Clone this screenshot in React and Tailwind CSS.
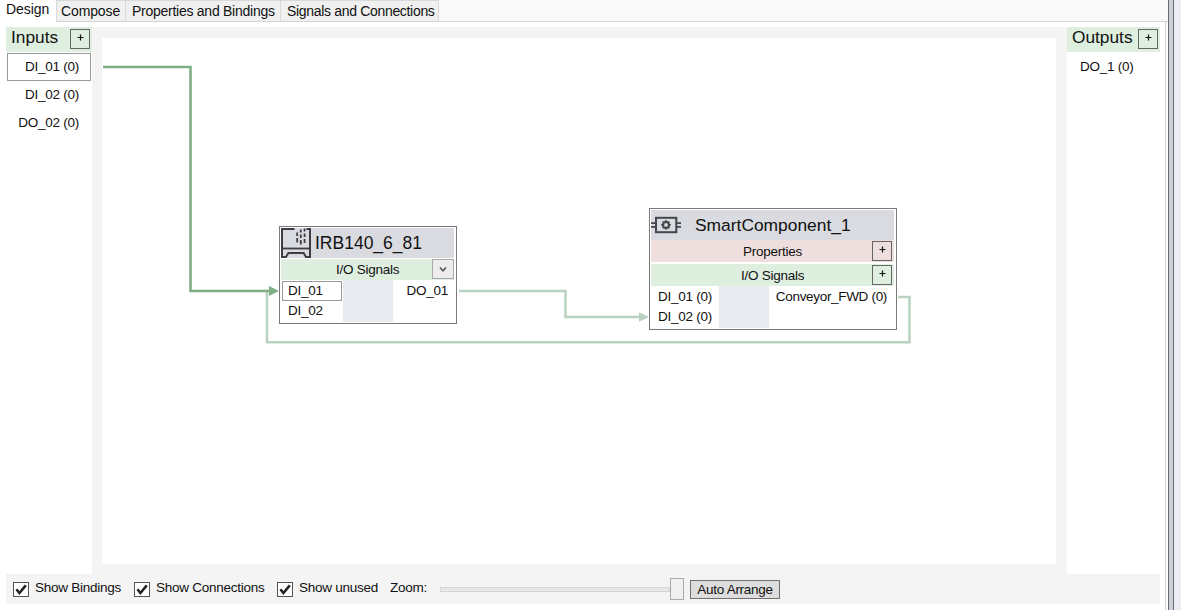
import React from 'react';

const CheckBox = ({ label, className }) => (
  <label className={`flex items-start ${className}`}>
    <span className="mt-[8px] h-[15px] w-[16px] shrink-0 border border-[#555] bg-white">
      <svg className="h-[13px] w-[14px]" viewBox="0 0 14 13" fill="none">
        <path d="M2.4 6.2 L5.4 10 L11.8 2.4" stroke="#222" strokeWidth="2.5" />
      </svg>
    </span>
    <span className="ml-[6px] mt-[4px] whitespace-nowrap leading-5">{label}</span>
  </label>
);

const PlusButton = ({ className }) => (
  <button className={`flex h-5 w-5 shrink-0 items-center justify-center border border-[#666] ${className}`}>
    <svg className="mb-[3px] h-[7px] w-[7px]" viewBox="0 0 7 7">
      <path d="M0.5 3.5 H6.5 M3.5 0.5 V6.5" stroke="#111" strokeWidth="1.2" />
    </svg>
  </button>
);

const ControllerIcon = () => (
  <svg className="h-[30px] w-[30px] shrink-0" viewBox="0 0 30 30" fill="none" stroke="#3e3e42">
    <path d="M13.5 1 H1 V29 H5 L7.4 25 H22.6 L25 29 H29 V1 H25.5" strokeWidth="2" />
    <path d="M1 20.5 H29" strokeWidth="1.8" />
    <path d="M16.2 4.5 V8 M16.2 10 V14.5 M19.8 1.5 V4.5 M19.8 6.5 V10 M19.8 12 V16.5 M23.6 0.5 V3.5 M23.6 5.5 V9 M23.6 11 V15" strokeWidth="1.8" />
  </svg>
);

const ComponentIcon = () => (
  <svg className="mt-[6px] h-[18px] w-[30px] shrink-0" viewBox="0 0 30 18" fill="none" stroke="#44464b">
    <rect x="5" y="1.8" width="20.3" height="14.4" strokeWidth="2" />
    <path d="M0 7.2 H5 M0 10.8 H5 M25 7.2 H30 M25 10.8 H30" strokeWidth="1.7" />
    <circle cx="15" cy="8.9" r="2.9" strokeWidth="2" />
    <path d="M15 4.1 V6 M15 11.8 V13.7 M10.2 8.9 H12 M18 8.9 H19.8 M11.6 5.5 L13 6.9 M17 10.9 L18.4 12.3 M18.4 5.5 L17 6.9 M13 10.9 L11.6 12.3" strokeWidth="1.6" />
  </svg>
);

const Connections = () => (
  <svg className="absolute inset-0 h-full w-full" viewBox="102 38 954 526" fill="none">
    <g stroke="#b9d2c0" strokeWidth="2.5">
      <path d="M898 297 H909.5 V342.3 H267 V291" />
      <path d="M459 291 H565.5 V317 H640" />
    </g>
    <path d="M639 312.3 L649 317 L639 321.7 Z" fill="#b9d2c0" />
    <path d="M103 67 H190.5 V291 H270" stroke="#80ae86" strokeWidth="2.6" />
    <path d="M269 286 L279 291 L269 296 Z" fill="#80ae86" />
  </svg>
);

const tabs = [
  { name: 'Compose', cls: 'w-[70px] pl-[4px] tracking-[-0.12px]' },
  { name: 'Properties and Bindings', cls: 'w-[155px] pl-[6px] tracking-[-0.26px]' },
  { name: 'Signals and Connections', cls: 'w-[158px] pl-[6px] tracking-[-0.32px]' },
];

export default function App() {
  return (
    <div className="flex h-[610px] w-[1181px] overflow-hidden bg-white font-['Liberation_Sans',Arial,sans-serif] text-[13.5px] tracking-[-0.26px] text-[#111]">
      <div className="flex w-[1168px] flex-col">
        <nav className="flex h-[22px] shrink-0 bg-[#f9f9f9] text-[14px]">
          <div className="w-[56px] bg-white pl-[6px] leading-[19px] tracking-[-0.05px]">Design</div>
          <div className="flex flex-1 border-b border-[#d5d5d5]">
            {tabs.map((t) => (
              <div key={t.name} className={`whitespace-nowrap border-r border-t border-[#d9d9d9] bg-[#f0f0f0] leading-[21px] first:border-l ${t.cls}`}>
                {t.name}
              </div>
            ))}
          </div>
        </nav>

        <div className="mr-[2px] flex-1 border-r border-[#d0d0d0] pl-[6px] pt-[5px]">
          <main className="flex h-[577px] w-[1154px] flex-col bg-[#f4f4f4]">
            <div className="flex h-[547px]">
              <aside className="w-[86px] bg-white">
                <header className="flex h-[25px] items-start bg-[#deeedf]">
                  <h2 className="w-[64px] pl-[5px] text-[17.3px] leading-[20px] tracking-normal">Inputs</h2>
                  <PlusButton className="mt-[2px]" />
                </header>
                <div className="ml-[1px] mt-[1px] flex h-7 w-[84px] items-center justify-end border border-[#999] pr-[11px]">DI_01 (0)</div>
                <div className="flex h-7 items-center justify-end pr-[13px]">DI_02 (0)</div>
                <div className="flex h-7 items-center justify-end pr-[13px]">DO_02 (0)</div>
              </aside>

              <section className="relative ml-[10px] mt-[11px] h-[526px] w-[954px] bg-white">
                <Connections />

                <article className="absolute left-[177px] top-[188px] h-[98px] w-[178px] border border-[#7a7a7a] bg-white pb-[1px] pl-[1px] pr-[2px] pt-[1px]">
                  <div className="flex h-[30px] bg-[#dadbe0]">
                    <ControllerIcon />
                    <h3 className="pl-[4px] text-[17.5px] leading-[30px] tracking-normal">IRB140_6_81</h3>
                  </div>
                  <div className="mt-[1px] flex h-[21px] bg-[#deeedf]">
                    <span className="w-[151px] pl-[55px] leading-[21px]">I/O Signals</span>
                    <button className="flex h-[20px] w-[22px] items-center justify-center border border-[#aaa] bg-[#ececec]">
                      <svg className="h-[7px] w-[8px]" viewBox="0 0 8 7" fill="none">
                        <path d="M1 1.5 L4 4.8 L7 1.5" stroke="#555" strokeWidth="1.6" />
                      </svg>
                    </button>
                  </div>
                  <div className="flex h-[42px]">
                    <div className="w-[62px] pl-[1px] pt-[1px]">
                      <div className="h-5 w-[60px] border border-[#999] pl-[5px] leading-[18px]">DI_01</div>
                      <div className="h-5 pl-[6px] leading-[19px]">DI_02</div>
                    </div>
                    <div className="w-[50px] bg-[#e8ebf0]" />
                    <div className="flex-1 pr-[6px] pt-[1px] text-right leading-5">DO_01</div>
                  </div>
                </article>

                <article className="absolute left-[547px] top-[170px] h-[122px] w-[248px] border border-[#7a7a7a] bg-white pb-[1px] pl-[1px] pr-[2px] pt-[1px]">
                  <div className="flex h-[30px] bg-[#dadbe0]">
                    <ComponentIcon />
                    <h3 className="pl-[14px] text-[17.4px] leading-[30px] tracking-normal">SmartComponent_1</h3>
                  </div>
                  <div className="flex h-[22px] bg-[#efdede]">
                    <span className="w-[221px] pl-[92px] leading-[23px]">Properties</span>
                    <PlusButton className="mt-[1px]" />
                  </div>
                  <div className="mt-[2px] flex h-[22px] bg-[#deeedf]">
                    <span className="w-[221px] pl-[90px] leading-[23px]">I/O Signals</span>
                    <PlusButton className="mt-[1px]" />
                  </div>
                  <div className="flex h-[42px]">
                    <div className="w-[68px] pl-[7px]">
                      <div className="h-5 leading-[21px]">DI_01 (0)</div>
                      <div className="h-5 leading-[21px]">DI_02 (0)</div>
                    </div>
                    <div className="w-[50px] bg-[#e8ebf0]" />
                    <div className="flex-1 whitespace-nowrap pr-[7px] text-right leading-[21px] tracking-[-0.32px]">Conveyor_FWD (0)</div>
                  </div>
                </article>
              </section>

              <aside className="ml-[11px] w-[93px] bg-white">
                <header className="flex h-[25px] items-start bg-[#deeedf]">
                  <h2 className="w-[71px] pl-[5px] text-[17.3px] leading-[20px] tracking-normal">Outputs</h2>
                  <PlusButton className="mt-[2px]" />
                </header>
                <div className="mt-[1px] flex h-7 items-center pl-[13px]">DO_1 (0)</div>
              </aside>
            </div>

            <footer className="flex h-[30px] items-start">
              <CheckBox label="Show Bindings" className="w-[121px] pl-[7px]" />
              <CheckBox label="Show Connections" className="w-[143px] pl-[7px]" />
              <CheckBox label="Show unused" className="w-[120px] pl-[7px]" />
              <span className="mt-[4px] w-[50px] leading-5">Zoom:</span>
              <div className="flex h-[30px] w-[244px] items-center">
                <div className="h-[5px] flex-1 border border-[#d6d6d6] bg-[#e7e7e7]" />
                <div className="h-[22px] w-[14px] border border-[#aaa] bg-[#f0f0f0]" />
              </div>
              <button className="ml-[6px] mt-[6px] h-[19px] w-[90px] whitespace-nowrap border border-[#707070] bg-[#dddddd] leading-[18px]">Auto Arrange</button>
            </footer>
          </main>
        </div>
      </div>
      <div className="w-[6px] border-x border-[#666a72] bg-[#cdd0d6]" />
      <div className="flex-1 bg-[#ecedf3]" />
    </div>
  );
}
